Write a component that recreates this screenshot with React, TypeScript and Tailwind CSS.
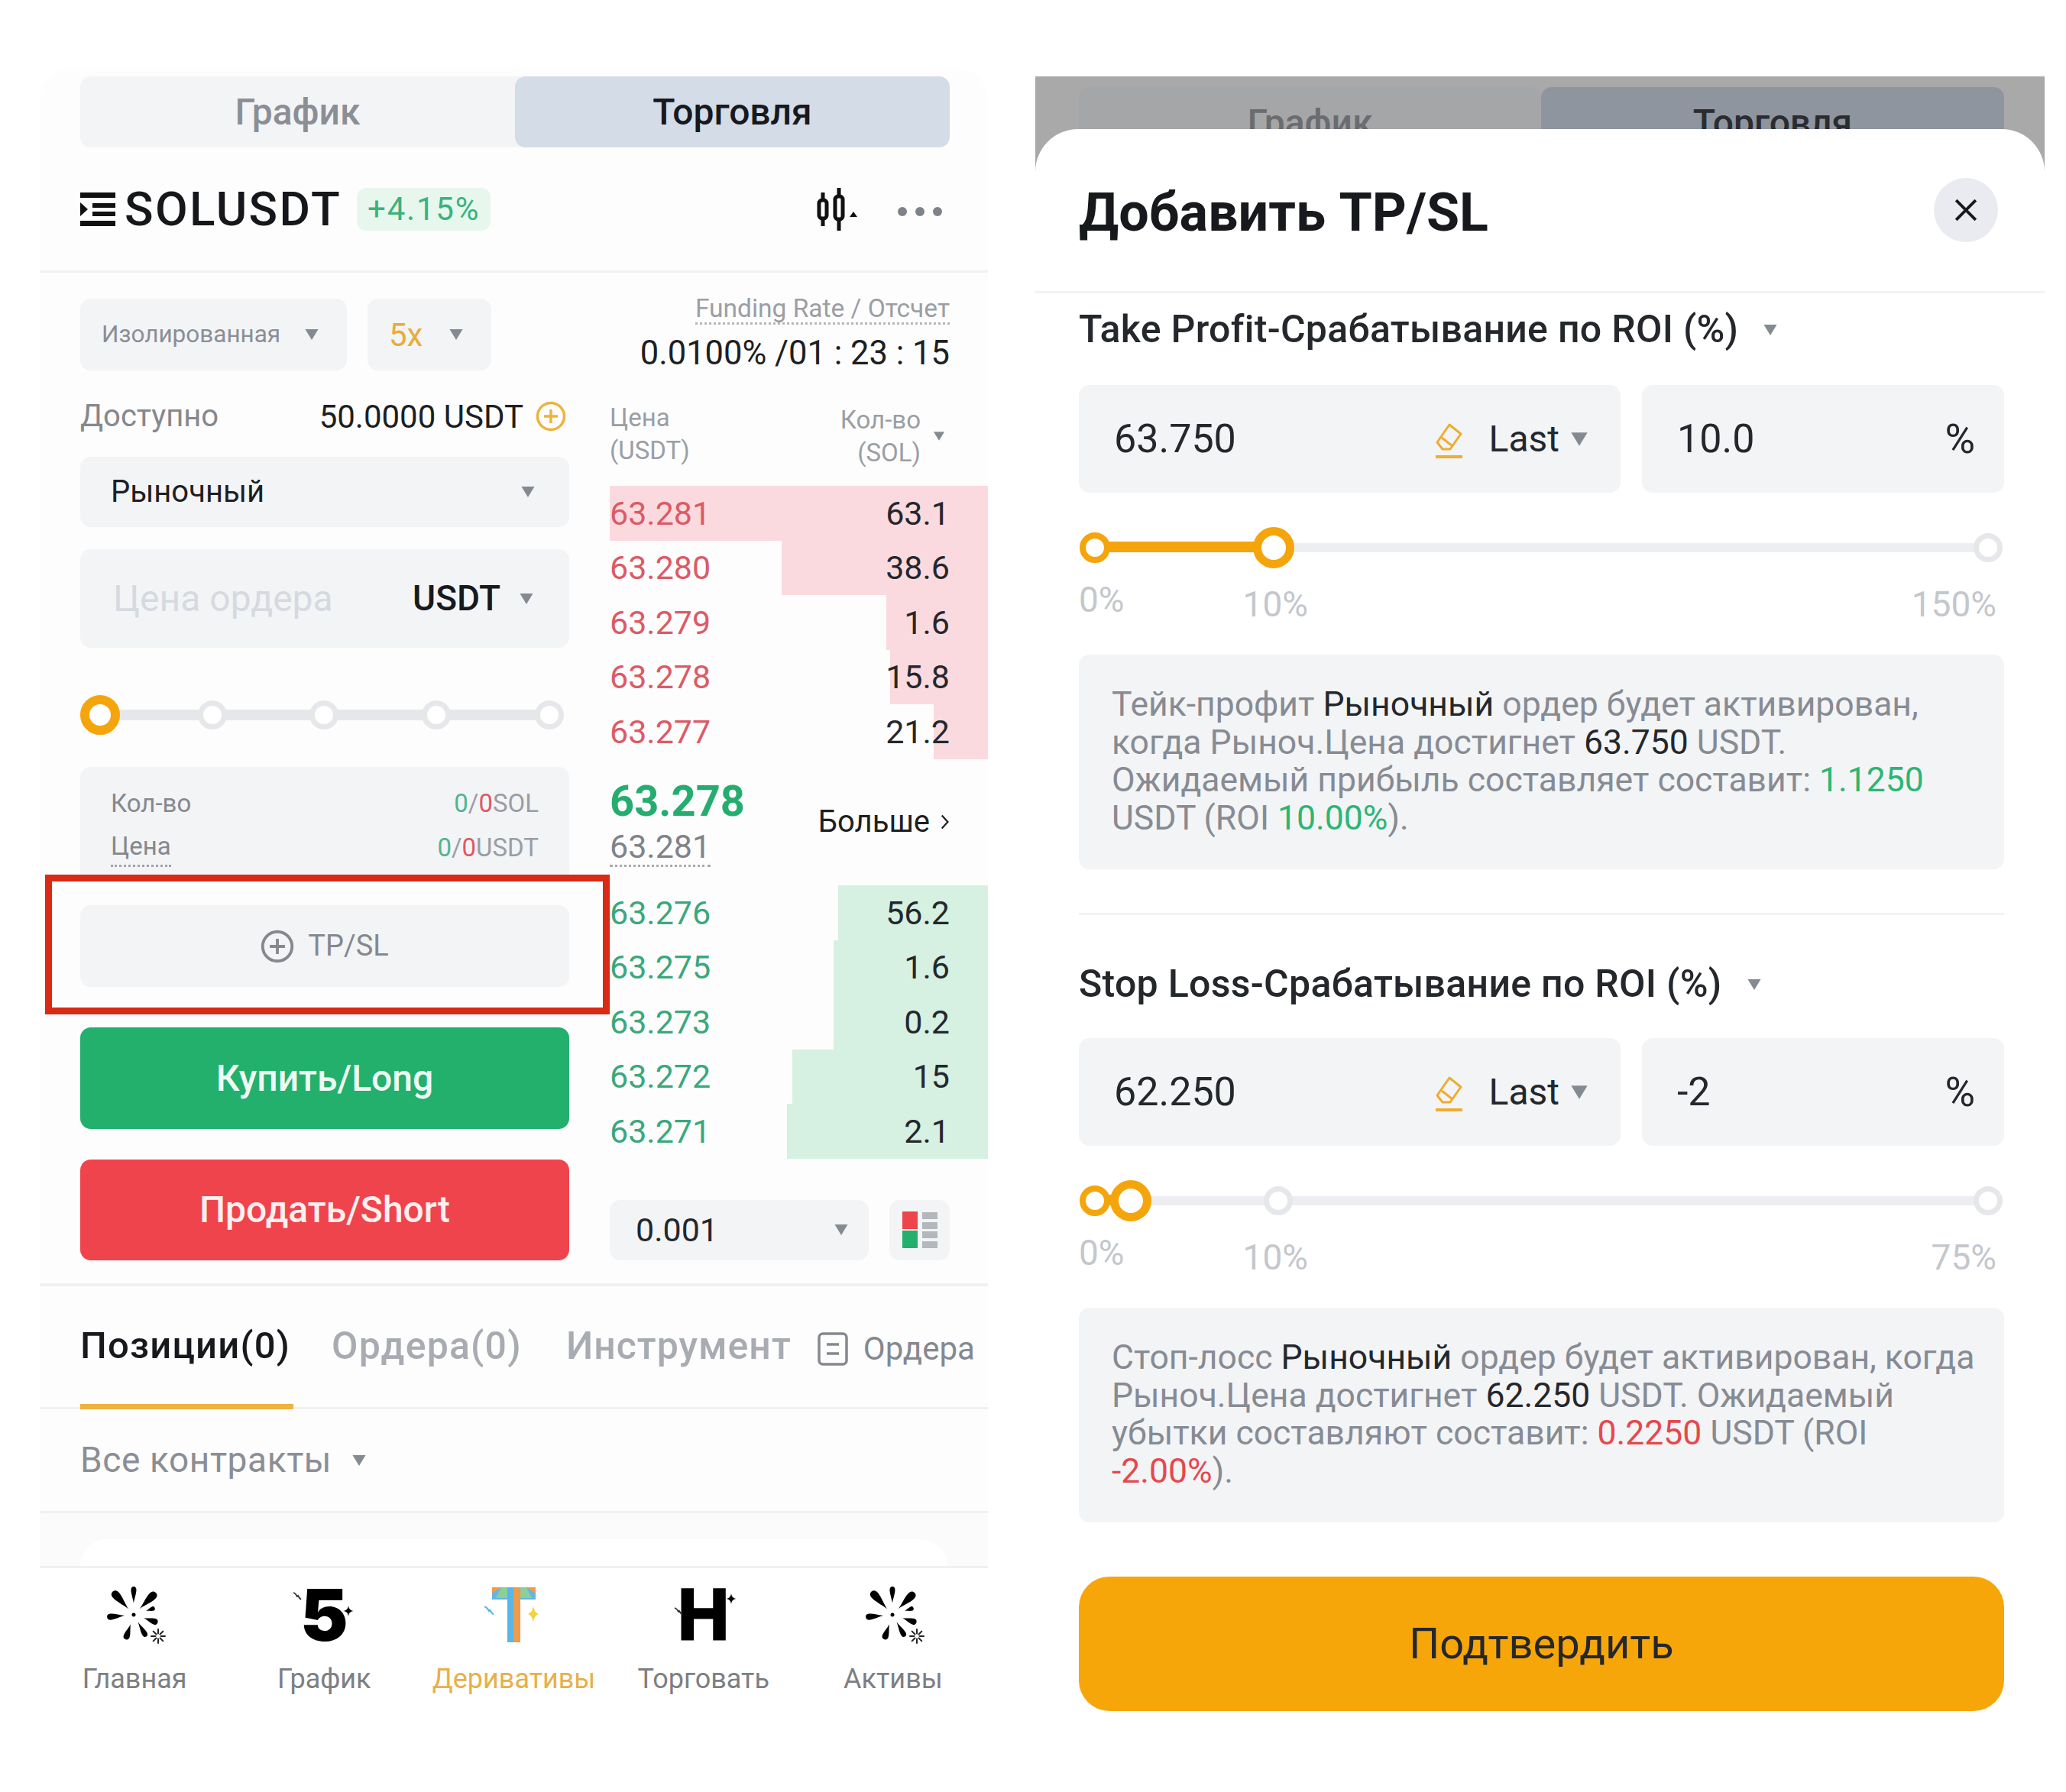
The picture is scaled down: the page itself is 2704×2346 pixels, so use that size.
import type { ReactNode } from 'react'

const sellRows = [
  { price: '63.281', qty: '63.1', inset: 0 },
  { price: '63.280', qty: '38.6', inset: 225 },
  { price: '63.279', qty: '1.6', inset: 362 },
  { price: '63.278', qty: '15.8', inset: 367 },
  { price: '63.277', qty: '21.2', inset: 424 },
]

const buyRows = [
  { price: '63.276', qty: '56.2', inset: 299 },
  { price: '63.275', qty: '1.6', inset: 293 },
  { price: '63.273', qty: '0.2', inset: 293 },
  { price: '63.272', qty: '15', inset: 239 },
  { price: '63.271', qty: '2.1', inset: 232 },
]

const petals = [
  { a: 0, r0: 15, r1: 37, w: 6 },
  { a: 45, r0: 11, r1: 41, w: 9 },
  { a: 72, r0: 17, r1: 29, w: 5 },
  { a: 108, r0: 14, r1: 33, w: 7 },
  { a: 150, r0: 11, r1: 33, w: 6 },
  { a: 198, r0: 13, r1: 34, w: 7 },
  { a: 265, r0: 12, r1: 35, w: 7 },
  { a: 318, r0: 10, r1: 41, w: 9 },
]

function Caret({ className = 'w-[20px] h-[16px]', color = '#858a92' }: { className?: string; color?: string }) {
  return (
    <svg viewBox="0 0 18 15" className={className}>
      <path d="M1 1h16L9 14z" fill={color} />
    </svg>
  )
}

function PlusCircle({ color, size = 'w-[40px] h-[40px]' }: { color: string; size?: string }) {
  return (
    <svg viewBox="0 0 40 40" className={size} fill="none" stroke={color} strokeWidth="3.5">
      <circle cx="20" cy="20" r="17.5" />
      <path d="M20 11v18M11 20h18" />
    </svg>
  )
}

function Sparkle({ className, color = '#000' }: { className: string; color?: string }) {
  return (
    <svg viewBox="0 0 20 20" className={className}>
      <path d="M10 0c1 6 3 9 10 10-7 1-9 4-10 10-1-6-3-9-10-10 7-1 9-4 10-10z" fill={color} />
    </svg>
  )
}

// tiny comet mark that sits left of the nav glyphs
function Comet({ className, color = '#333' }: { className: string; color?: string }) {
  return (
    <svg viewBox="0 0 12 12" className={className} fill="none" stroke={color} strokeWidth="1.8">
      <path d="M1 1c3 1 4 3 5 5l1-1c1 2 2 3 4 5" />
    </svg>
  )
}

function Firework() {
  return (
    <svg viewBox="0 0 90 84" className="w-[90px] h-[84px]">
      <g transform="translate(44 42)">
        <circle r="2.5" fill="#000" />
        {petals.map((p) => {
          const len = p.r1 - p.r0
          return (
            <path
              key={p.a}
              transform={`rotate(${p.a})`}
              d={`M0 ${-p.r0}C${-p.w * 0.2} ${-p.r0 - len * 0.4} ${-p.w * 1.2} ${-p.r1 + len * 0.02} 0 ${-p.r1}C${p.w * 1.2} ${-p.r1 + len * 0.02} ${p.w * 0.2} ${-p.r0 - len * 0.4} 0 ${-p.r0}z`}
              fill="#000"
            />
          )
        })}
      </g>
      <g transform="translate(76 70)" stroke="#222" strokeWidth="2" strokeLinecap="round">
        {[0, 45, 90, 135, 180, 225, 270, 315].map((a) => (
          <path key={a} transform={`rotate(${a})`} d="M0 -3.5V-9" />
        ))}
      </g>
    </svg>
  )
}

function FiveIcon() {
  return (
    <div className="relative h-[84px] w-[90px] flex items-center justify-center">
      <span className="font-['Inter',sans-serif] font-black text-[94px] leading-none text-black">5</span>
      <Sparkle className="absolute right-[6px] top-[27px] w-[14px] h-[20px]" />
      <Comet className="absolute left-[4px] top-[12px] w-[12px] h-[12px]" />
    </div>
  )
}

function TIcon() {
  return (
    <div className="relative h-[84px] w-[90px]">
      <svg viewBox="0 0 90 84" className="w-[90px] h-[84px]">
        <path d="M17 6h57v16H17z" fill="#63b5e6" />
        <path d="M17 6h12l-12 8zM74 6H62l12 8z" fill="#f29a47" />
        <path d="M29 6h9v14h-16zM62 6h-9v14h16z" fill="#8ccf98" />
        <path d="M37 6h8v72h-8z" fill="#5ab6e6" />
        <path d="M45 6h9v72h-9z" fill="#f29a47" />
        <path d="M71 30c1 7 3 9 7 11-4 2-6 4-7 11-1-7-3-9-7-11 4-2 6-4 7-11z" fill="#f2d43c" />
      </svg>
      <Comet className="absolute left-[6px] top-[30px] w-[14px] h-[14px]" color="#5ab6e6" />
    </div>
  )
}

function HIcon() {
  return (
    <div className="relative h-[84px] w-[90px] flex items-center justify-center">
      <span className="font-['Liberation_Sans',sans-serif] font-bold text-[94px] leading-none text-black [-webkit-text-stroke:3px_#000]">H</span>
      <Sparkle className="absolute right-[2px] top-[13px] w-[14px] h-[16px]" />
      <Comet className="absolute left-[6px] top-[32px] w-[12px] h-[12px]" />
    </div>
  )
}

function NavItem({ icon, label, active }: { icon: ReactNode; label: string; active?: boolean }) {
  return (
    <div className="flex flex-col items-center">
      {icon}
      <div className={`mt-[20px] text-[36px] leading-[44px] ${active ? 'text-[#e8b04a]' : 'text-[#7d7f84]'}`}>{label}</div>
    </div>
  )
}

function Knob({ left, big, gray }: { left: number; big?: boolean; gray?: boolean }) {
  const cls = big
    ? 'w-[54px] h-[54px] border-[11px] border-[#f5a50c] z-10'
    : gray
      ? 'w-[38px] h-[38px] border-[7px] border-[#e6e7ea]'
      : 'w-[40px] h-[40px] border-[8px] border-[#f5a50c]'
  return (
    <div
      className={`absolute top-1/2 -translate-x-1/2 -translate-y-1/2 rounded-full bg-white ${cls}`}
      style={{ left }}
    />
  )
}

function OrderRow({ price, qty, inset, sell }: { price: string; qty: string; inset: number; sell?: boolean }) {
  return (
    <div className="relative h-[71.6px] flex items-center justify-between pr-[50px] text-[43px]">
      <div
        className={`absolute inset-y-0 right-0 ${sell ? 'bg-[#fbdadf]' : 'bg-[#d6f0e2]'}`}
        style={{ left: inset }}
      />
      <span className={`relative ${sell ? 'text-[#dc5a66]' : 'text-[#3aa87c]'}`}>{price}</span>
      <span className="relative text-[#24272c]">{qty}</span>
    </div>
  )
}

function TradePanel() {
  return (
    <div className="ml-[52px] mt-[90px] w-[1241px] h-[2190px] rounded-t-[40px] bg-[#fdfdfd] shrink-0">
      <div className="pl-[53px] pr-[50px] pt-[10px]">
        <div className="flex h-[93px] rounded-[14px] bg-[#f3f4f6] text-[48px] font-medium">
          <div className="flex-1 flex items-center justify-center text-[#8b8e95]">График</div>
          <div className="w-[569px] flex items-center justify-center rounded-[14px] bg-[#d4dce8] text-[#17191d]">Торговля</div>
        </div>
      </div>
      <div className="flex items-center h-[164px] pl-[53px] pr-[60px] border-b-[3px] border-[#f0f1f3]">
        <svg viewBox="0 0 46 44" className="w-[46px] h-[44px] mr-[12px]">
          <path d="M0 0h46v7H0zM0 37h46v7H0zM16 14h30v6H16zM16 25h30v6H16zM0 13l10 9-10 9z" fill="#111" />
        </svg>
        <span className="text-[62px] font-medium leading-none tracking-[2.4px] text-[#15171a]">SOLUSDT</span>
        <span className="ml-[20px] w-[175px] h-[56px] rounded-[12px] bg-[#e7f7ee] flex items-center justify-center text-[42px] tracking-[1.8px] text-[#3ab27e]">+4.15%</span>
        <svg viewBox="0 0 60 56" className="ml-auto mr-[50px] w-[60px] h-[56px]" fill="none" stroke="#111" strokeWidth="5">
          <path d="M12 6v44M33 0v56" />
          <rect x="7" y="16" width="10" height="24" rx="4" fill="#fff" />
          <rect x="28" y="11" width="10" height="30" rx="4" fill="#fff" />
          <path d="M52 31l5 7H47z" fill="#111" stroke="none" />
        </svg>
        <div className="flex gap-[11px] mt-[6px]">
          <span className="w-[12px] h-[12px] rounded-full bg-[#7e8289]" />
          <span className="w-[12px] h-[12px] rounded-full bg-[#7e8289]" />
          <span className="w-[12px] h-[12px] rounded-full bg-[#7e8289]" />
        </div>
      </div>

      <div className="flex pl-[53px] pt-[34px]">
        <div className="w-[640px]">
          <div className="flex gap-[27px]">
            <div className="w-[349px] h-[94px] rounded-[14px] bg-[#f3f4f6] flex items-center justify-between pl-[28px] pr-[36px]">
              <span className="text-[31.5px] text-[#8b8e95]">Изолированная</span>
              <Caret />
            </div>
            <div className="w-[162px] h-[94px] rounded-[14px] bg-[#f3f4f6] flex items-center justify-between pl-[28px] pr-[36px]">
              <span className="text-[42px] text-[#e8ac3c]">5x</span>
              <Caret />
            </div>
          </div>
          <div className="mt-[30px] h-[60px] flex items-center justify-between">
            <span className="text-[40px] text-[#85888e]">Доступно</span>
            <div className="flex items-center gap-[16px] pr-[4px]">
              <span className="text-[42px] text-[#1d1f23]">50.0000 USDT</span>
              <PlusCircle color="#eeb23f" />
            </div>
          </div>
          <div className="mt-[23px] h-[92px] rounded-[14px] bg-[#f3f4f6] flex items-center justify-between pl-[40px] pr-[44px]">
            <span className="text-[40px] text-[#1d1f23]">Рыночный</span>
            <Caret />
          </div>
          <div className="mt-[29px] h-[129px] rounded-[14px] bg-[#f3f4f6] flex items-center pl-[43px] pr-[46px]">
            <span className="text-[48px] text-[#d6d9e0]">Цена ордера</span>
            <span className="ml-auto text-[46px] font-medium text-[#17191d]">USDT</span>
            <Caret className="ml-[24px] w-[20px] h-[16px]" />
          </div>
          <div className="relative mt-[68px] h-[40px]">
            <div className="absolute left-[26px] right-[26px] top-[13px] h-[14px] bg-[#e6e7ea]" />
            <Knob left={173} gray />
            <Knob left={319} gray />
            <Knob left={466} gray />
            <Knob left={614} gray />
            <div className="absolute left-0 top-[-6px] w-[52px] h-[52px] rounded-full bg-white border-[12px] border-[#f5a50c]" />
          </div>
          <div className="mt-[48px] h-[143px] rounded-t-[14px] bg-[#f3f4f6] px-[40px] pt-[19px] text-[33px] leading-[58px] text-[#85888e]">
            <div className="flex justify-between">
              <span>Кол-во</span>
              <span className="text-[#9a9da3]">
                <span className="text-[#52b48c]">0</span>/<span className="text-[#dc5a66]">0</span>SOL
              </span>
            </div>
            <div className="flex justify-between">
              <span className="border-b-[3px] border-dotted border-[#a0a3a9] leading-[54px] h-[54px]">Цена</span>
              <span className="text-[#9a9da3]">
                <span className="text-[#52b48c]">0</span>/<span className="text-[#dc5a66]">0</span>USDT
              </span>
            </div>
          </div>
          <div className="relative mt-[38px] h-[107px] rounded-[14px] bg-[#f3f4f6] flex items-center justify-center gap-[18px]">
            <PlusCircle color="#85888e" size="w-[44px] h-[44px]" />
            <span className="text-[38px] text-[#85888e]">TP/SL</span>
            <div className="absolute left-[-46px] right-[-53px] top-[-40px] bottom-[-36px] border-[9px] border-[#d82a14]" />
          </div>
          <div className="mt-[53px] h-[133px] rounded-[14px] bg-[#22b06c] flex items-center justify-center text-[48px] font-medium text-[#eefaf3]">Купить/Long</div>
          <div className="mt-[40px] h-[132px] rounded-[14px] bg-[#f0444c] flex items-center justify-center text-[48px] font-medium text-[#fff0f0]">Продать/Short</div>
        </div>

        <div className="ml-[53px] w-[495px] -mt-[5px]">
          <div className="pr-[50px] flex flex-col items-end">
            <span className="text-[33.5px] leading-[36px] text-[#9b9ea4] border-b-[3px] border-dotted border-[#b4b6bb]">Funding Rate / Отсчет</span>
            <span className="mt-[14px] text-[43.5px] leading-[48px] text-[#1d1f23]">0.0100% /01 : 23 : 15</span>
          </div>
          <div className="mt-[38px] h-[92px] pr-[56px] flex justify-between text-[33px] leading-[43px] text-[#9b9ea4]">
            <div>
              Цена
              <br />
              (USDT)
            </div>
            <div className="flex items-center gap-[16px] text-right">
              <div>
                Кол-во
                <br />
                (SOL)
              </div>
              <Caret className="w-[16px] h-[14px]" />
            </div>
          </div>
          <div className="mt-[19px]">
            {sellRows.map((r) => (
              <OrderRow key={r.price} {...r} sell />
            ))}
          </div>
          <div className="h-[165px] pr-[50px] flex items-center justify-between">
            <div className="flex flex-col items-start">
              <span className="text-[56px] leading-[62px] font-bold text-[#25ad70]">63.278</span>
              <span className="mt-[4px] text-[43px] leading-[48px] text-[#7f838a] border-b-[3px] border-dotted border-[#a8abb0]">63.281</span>
            </div>
            <div className="flex items-center gap-[14px] text-[40px] text-[#1d1f23]">
              Больше
              <svg viewBox="0 0 14 24" className="w-[12px] h-[22px]" fill="none" stroke="#1d1f23" strokeWidth="2.6">
                <path d="M2 2l9 10-9 10" />
              </svg>
            </div>
          </div>
          <div>
            {buyRows.map((r) => (
              <OrderRow key={r.price} {...r} />
            ))}
          </div>
          <div className="mt-[54px] flex gap-[27px] pr-[50px]">
            <div className="w-[339px] h-[79px] rounded-[14px] bg-[#f3f4f6] flex items-center justify-between pl-[34px] pr-[26px] text-[43px] text-[#24272c]">
              0.001
              <Caret />
            </div>
            <div className="w-[79px] h-[79px] rounded-[14px] bg-[#f3f4f6] flex items-center justify-center">
              <svg viewBox="0 0 46 48" className="w-[46px] h-[48px]">
                <path d="M0 0h20v23H0z" fill="#ee444c" />
                <path d="M0 25h20v23H0z" fill="#22b06c" />
                <path d="M26 1h20v9H26zM26 14h20v9H26zM26 26h20v9H26zM26 39h20v9H26z" fill="#b4b7bc" />
              </svg>
            </div>
          </div>
        </div>
      </div>

      <div className="mt-[30px] h-[165px] flex items-start pl-[53px] border-t-[4px] border-b-[3px] border-[#f0f1f3] relative">
        <div className="flex items-center h-[156px] w-full">
          <span className="text-[49px] font-medium tracking-[1.2px] text-[#17191d]">Позиции(0)</span>
          <span className="ml-[54px] text-[50px] font-medium tracking-[1.2px] text-[#a8abb2]">Ордера(0)</span>
          <span className="ml-[58px] text-[50px] font-medium tracking-[1px] text-[#a8abb2]">Инструмент</span>
          <svg viewBox="0 0 40 44" className="ml-[34px] mt-[8px] w-[40px] h-[44px]" fill="none" stroke="#85888e" strokeWidth="3.5">
            <rect x="2" y="2" width="36" height="40" rx="5" />
            <path d="M12 16h16M12 28h16" />
          </svg>
          <span className="ml-[20px] mt-[6px] text-[42px] text-[#85888e]">Ордера</span>
        </div>
        <div className="absolute left-[53px] bottom-[-3px] w-[279px] h-[7px] bg-[#eeb23f]" />
      </div>

      <div className="h-[136px] pl-[53px] flex items-center gap-[26px] border-b-[3px] border-[#f0f1f3]">
        <span className="text-[46px] tracking-[0.6px] text-[#8b8e95]">Все контракты</span>
        <Caret className="w-[20px] h-[16px]" />
      </div>

      <div className="h-[72px] px-[53px] pt-[34px] border-b-[3px] border-[#f0f1f3] bg-[#fbfbfb]">
        <div className="h-full rounded-t-[40px] bg-white" />
      </div>

      <div className="grid grid-cols-5 pt-[19px] bg-white h-[238px]">
        <NavItem icon={<Firework />} label="Главная" />
        <NavItem icon={<FiveIcon />} label="График" />
        <NavItem icon={<TIcon />} label="Деривативы" active />
        <NavItem icon={<HIcon />} label="Торговать" />
        <NavItem icon={<Firework />} label="Активы" />
      </div>
    </div>
  )
}

function Eraser() {
  return (
    <svg viewBox="0 0 40 48" className="w-[40px] h-[48px]" fill="none" stroke="#eeac33" strokeWidth="3">
      <path d="M20 3l15 12-14 20H11L4 26z" strokeLinejoin="round" />
      <path d="M10 20l14 11" />
      <path d="M2 45h35" strokeWidth="4" />
    </svg>
  )
}

function FieldRow({ price, pct }: { price: string; pct: string }) {
  return (
    <div className="flex gap-[28px] text-[#24272c]">
      <div className="w-[709px] h-[141px] rounded-[14px] bg-[#f3f4f6] flex items-center pl-[46px] pr-[42px]">
        <span className="text-[52px]">{price}</span>
        <div className="ml-auto mt-[4px]">
          <Eraser />
        </div>
        <span className="ml-[32px] text-[48px]">Last</span>
        <Caret className="ml-[14px] w-[24px] h-[20px]" />
      </div>
      <div className="w-[474px] h-[141px] rounded-[14px] bg-[#f3f4f6] flex items-center justify-between pl-[46px] pr-[38px]">
        <span className="text-[52px]">{pct}</span>
        <span className="text-[54px]">%</span>
      </div>
    </div>
  )
}

function ModalSlider({ fill, big, mid, last }: { fill: number; big: number; mid?: number; last: string }) {
  return (
    <div>
      <div className="relative h-[56px]">
        <div className="absolute left-[21px] right-[21px] top-[22px] h-[12px] bg-[#eceef2]" />
        <div className="absolute left-[21px] top-[20px] h-[14px] bg-[#f5a50c]" style={{ width: fill }} />
        <Knob left={21} />
        {mid !== undefined && <Knob left={mid} gray />}
        <Knob left={big} big />
        <Knob left={1190} gray />
      </div>
      <div className="mt-[22px] flex items-start text-[46px] leading-[48px] text-[#c4c7cc]">
        <span className="-mt-[6px]">0%</span>
        <span className="ml-[155px]">10%</span>
        <span className="ml-auto mr-[10px]">{last}</span>
      </div>
    </div>
  )
}

function InfoBox({ children }: { children: ReactNode }) {
  return (
    <div className="mt-[42px] h-[281px] rounded-[14px] bg-[#f3f4f6] pl-[43px] pt-[41px] text-[44.5px] leading-[49.5px] text-[#878b93] whitespace-nowrap">
      {children}
    </div>
  )
}

function SectionTitle({ children }: { children: string }) {
  return (
    <div className="flex items-center gap-[30px] text-[50px] font-medium tracking-[0.3px] text-[#24272c]">
      {children}
      <Caret className="w-[24px] h-[16px]" />
    </div>
  )
}

function TpSlModal() {
  return (
    <div className="ml-[62px] mt-[100px] w-[1321px] h-[2246px] bg-[#a9a9a9] shrink-0">
      <div className="h-[69px] overflow-hidden pl-[57px] pr-[53px] pt-[14px]">
        <div className="flex h-[93px] text-[48px] font-medium">
          <div className="flex-1 rounded-[14px] bg-[#a5a6a7] flex items-center justify-center text-[#6a6c70]">График</div>
          <div className="w-[606px] rounded-[14px] bg-[#8f959e] flex items-center justify-center text-[#2a2c30]">Торговля</div>
        </div>
      </div>
      <div className="h-[2177px] rounded-t-[56px] bg-white">
        <div className="h-[215px] pl-[57px] pr-[61px] flex items-center justify-between border-b-[3px] border-[#f2f3f5]">
          <span className="mt-[6px] text-[70px] font-bold text-[#17191d] leading-none">Добавить TP/SL</span>
          <div className="w-[84px] h-[84px] rounded-full bg-[#e9ebf1] flex items-center justify-center">
            <svg viewBox="0 0 30 30" className="w-[32px] h-[32px]" fill="none" stroke="#17191d" strokeWidth="3.6">
              <path d="M3 3l24 24M27 3L3 27" />
            </svg>
          </div>
        </div>
        <div className="pl-[57px] pr-[53px]">
          <div className="pt-[10px] h-[120px]">
            <SectionTitle>Take Profit-Срабатывание по ROI (%)</SectionTitle>
          </div>
          <FieldRow price="63.750" pct="10.0" />
          <div className="mt-[44px]">
            <ModalSlider fill={234} big={255} last="150%" />
          </div>
          <InfoBox>
            <div>
              Тейк-профит <span className="text-[#24272c]">Рыночный</span> ордер будет активирован,
            </div>
            <div>
              когда Рыноч.Цена достигнет <span className="text-[#24272c]">63.750</span> USDT.
            </div>
            <div>
              Ожидаемый прибыль составляет составит: <span className="text-[#2bb673]">1.1250</span>
            </div>
            <div>
              USDT (ROI <span className="text-[#2bb673]">10.00%</span>).
            </div>
          </InfoBox>
          <div className="mt-[57px] h-[3px] bg-[#f2f3f5]" />
          <div className="pt-[53px] h-[161px]">
            <SectionTitle>Stop Loss-Срабатывание по ROI (%)</SectionTitle>
          </div>
          <FieldRow price="62.250" pct="-2" />
          <div className="mt-[44px]">
            <ModalSlider fill={47} big={68} mid={261} last="75%" />
          </div>
          <InfoBox>
            <div>
              Стоп-лосс <span className="text-[#24272c]">Рыночный</span> ордер будет активирован, когда
            </div>
            <div>
              Рыноч.Цена достигнет <span className="text-[#24272c]">62.250</span> USDT. Ожидаемый
            </div>
            <div>
              убытки составляют составит: <span className="text-[#e5484d]">0.2250</span> USDT (ROI
            </div>
            <div>
              <span className="text-[#e5484d]">-2.00%</span>).
            </div>
          </InfoBox>
          <div className="mt-[71px] h-[176px] rounded-[40px] bg-[#f7a60a] flex items-center justify-center text-[56px] text-[#24272c]">Подтвердить</div>
        </div>
      </div>
    </div>
  )
}

export default function App() {
  return (
    <div className="flex w-[2704px] h-[2346px] overflow-hidden bg-white font-['Roboto','Noto_Sans',sans-serif]">
      <TradePanel />
      <TpSlModal />
    </div>
  )
}
